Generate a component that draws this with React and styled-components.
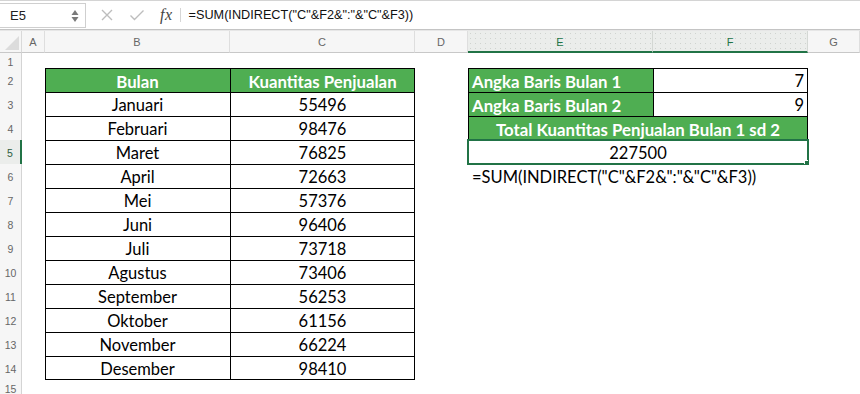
import React from "react"
import styled, { createGlobalStyle, css } from "styled-components"

const GREEN_FILL = "#4fae52"
const EXCEL_GREEN = "#217346"
const FORMULA = '=SUM(INDIRECT("C"&F2&":"&"C"&F3))'

const months = [
  ["Januari", 55496],
  ["Februari", 98476],
  ["Maret", 76825],
  ["April", 72663],
  ["Mei", 57376],
  ["Juni", 96406],
  ["Juli", 73718],
  ["Agustus", 73406],
  ["September", 56253],
  ["Oktober", 61156],
  ["November", 66224],
  ["Desember", 98410],
]

const columns = ["A", "B", "C", "D", "E", "F", "G"]
const activeCols = ["E", "F"]

const GlobalStyle = createGlobalStyle`
  html, body {
    margin: 0;
    padding: 0;
    background: #ffffff;
    overflow: hidden;
  }
`

export default function App() {
  const rows = []
  for (let r = 1; r <= 15; r++) rows.push(r)

  return (
    <>
      <GlobalStyle />
      <Window>
        <Toolbar>
          <NameBox>
            <span>E5</span>
            <Stepper width="8" height="14" viewBox="0 0 8 14">
              <path d="M4 1 L7.5 6 H0.5 Z" fill="#7a7a7a" />
              <path d="M4 13 L7.5 8 H0.5 Z" fill="#7a7a7a" />
            </Stepper>
          </NameBox>
          <ToolIcon width="14" height="14" viewBox="0 0 14 14">
            <path d="M2 2 L12 12 M12 2 L2 12" stroke="#bdbdbd" strokeWidth="1.4" fill="none" />
          </ToolIcon>
          <ToolIcon width="16" height="14" viewBox="0 0 16 14">
            <path d="M1.5 7.5 L5.5 11.5 L14.5 2.5" stroke="#bdbdbd" strokeWidth="1.4" fill="none" />
          </ToolIcon>
          <Fx>fx</Fx>
          <Divider />
          <FormulaText>{FORMULA}</FormulaText>
        </Toolbar>

        <Sheet>
          <Corner>
            <svg width="16" height="16" viewBox="0 0 16 16">
              <path d="M16 2 L16 16 L2 16 Z" fill="#dcdcdc" />
            </svg>
          </Corner>
          {columns.map((c) => (
            <ColHeader key={c} $active={activeCols.includes(c)}>
              {c}
            </ColHeader>
          ))}

          {rows.map((r) => (
            <React.Fragment key={r}>
              <RowHeader $active={r === 5}>{r}</RowHeader>
              <Cell />
              {renderLeftTable(r)}
              <Cell />
              {renderRightTable(r)}
              <Cell />
            </React.Fragment>
          ))}
        </Sheet>
      </Window>
    </>
  )
}

function renderLeftTable(r) {
  if (r === 2) {
    return (
      <>
        <Cell $fill $bold $top $left>Bulan</Cell>
        <Cell $fill $bold $top $left $right>Kuantitas Penjualan</Cell>
      </>
    )
  }
  if (r >= 3 && r <= 14) {
    const [name, qty] = months[r - 3]
    const last = r === 14
    return (
      <>
        <Cell $top $left $bottom={last}>{name}</Cell>
        <Cell $top $left $right $bottom={last}>{qty}</Cell>
      </>
    )
  }
  return (
    <>
      <Cell />
      <Cell />
    </>
  )
}

function renderRightTable(r) {
  if (r === 2 || r === 3) {
    return (
      <>
        <Cell $fill $bold $align="left" $top $left>
          Angka Baris Bulan {r - 1}
        </Cell>
        <Cell $align="right" $top $left $right>
          {r === 2 ? 7 : 9}
        </Cell>
      </>
    )
  }
  if (r === 4) {
    return (
      <Cell $span={2} $fill $bold $top $left $right>
        Total Kuantitas Penjualan Bulan 1 sd 2
      </Cell>
    )
  }
  if (r === 5) {
    return (
      <Cell $span={2} $selected $top $left $right $bottom>
        227500
      </Cell>
    )
  }
  if (r === 6) {
    return (
      <>
        <Cell $align="left" $overflow>{FORMULA}</Cell>
        <Cell />
      </>
    )
  }
  return (
    <>
      <Cell />
      <Cell />
    </>
  )
}

const Window = styled.div`
  width: 860px;
  height: 394px;
  overflow: hidden;
  background: #ffffff;
`

const Toolbar = styled.div`
  height: 28px;
  display: flex;
  align-items: center;
  border-top: 1px solid #d4d4d4;
  border-bottom: 1px solid #c4c4c4;
  box-shadow: 0 1px 0 #e6e6e6;
  font-family: "Liberation Sans", Arial, sans-serif;
`

const NameBox = styled.div`
  box-sizing: border-box;
  width: 86px;
  height: 25px;
  margin-top: 1px;
  display: flex;
  align-items: center;
  justify-content: space-between;
  padding: 0 6px 0 10px;
  border: 1px solid #cfcfcf;
  border-left: none;
  font-size: 13px;
  color: #222;
`

const Stepper = styled.svg`
  display: block;
`

const ToolIcon = styled.svg`
  display: block;
  margin-left: 15px;
  &:first-of-type {
    margin-left: 14px;
  }
`

const Fx = styled.span`
  margin-left: 15px;
  font-family: "Liberation Serif", "Times New Roman", serif;
  font-style: italic;
  font-size: 16px;
  color: #444;
  letter-spacing: 0.5px;
`

const Divider = styled.div`
  width: 1px;
  height: 14px;
  margin-left: 7px;
  background: #d6d6d6;
`

const FormulaText = styled.div`
  margin-left: 8px;
  font-size: 12.7px;
  color: #111;
  white-space: nowrap;
`

const Sheet = styled.div`
  display: grid;
  grid-template-columns: 22px 23px 185px 185px 53px 185px 155px 52px;
  grid-template-rows: 22px 15px repeat(13, 24px) 15px;
  margin-top: 1px;
`

const headerText = css`
  font-family: "Liberation Sans", Arial, sans-serif;
  font-size: 10.5px;
  color: #666;
  display: flex;
  align-items: center;
  justify-content: center;
  box-sizing: border-box;
`

const Corner = styled.div`
  background: #f6f6f6;
  border-right: 1px solid #d9d9d9;
  border-bottom: 1px solid #c8c8c8;
  display: flex;
  align-items: flex-end;
  justify-content: flex-end;
  padding: 0 2px 2px 0;
  box-sizing: border-box;
`

const ColHeader = styled.div`
  ${headerText};
  font-size: 11px;
  background: #f6f6f6;
  border-right: 1px solid #dedede;
  border-bottom: 1px solid #c8c8c8;
  padding-top: 1px;

  ${(p) =>
    p.$active &&
    css`
      color: ${EXCEL_GREEN};
      background-color: #ebedeb;
      background-image: radial-gradient(#cfd3cf 0.7px, transparent 0.8px);
      background-size: 5px 5px;
      border-bottom: 2px solid ${EXCEL_GREEN};
      border-right-color: #d4d8d4;
    `}
`

const RowHeader = styled.div`
  ${headerText};
  background: #f6f6f6;
  border-right: 1px solid #d4d4d4;
  padding-top: 2px;

  ${(p) =>
    p.$active &&
    css`
      color: #2e5d3f;
      background: #ebedeb;
      border-right: 2px solid ${EXCEL_GREEN};
    `}
`

const borderShadow = (p) => {
  const list = []
  if (p.$top) list.push("inset 0 1px 0 #000")
  if (p.$left) list.push("inset 1px 0 0 #000")
  if (p.$right) list.push("inset -1px 0 0 #000")
  if (p.$bottom) list.push("inset 0 -1px 0 #000")
  return list.length ? list.join(", ") : "none"
}

const Cell = styled.div`
  position: relative;
  box-sizing: border-box;
  grid-column: span ${(p) => p.$span || 1};
  display: flex;
  align-items: center;
  justify-content: ${(p) =>
    p.$align === "left" ? "flex-start" : p.$align === "right" ? "flex-end" : "center"};
  padding: 2px 4px 0 4px;
  font-family: Lato, "Noto Sans", sans-serif;
  font-size: ${(p) => (p.$bold ? "16.8px" : "16.5px")};
  font-weight: ${(p) => (p.$bold ? 700 : 400)};
  color: ${(p) => (p.$fill ? "#ffffff" : "#000000")};
  background: ${(p) => (p.$fill ? GREEN_FILL : "transparent")};
  box-shadow: ${borderShadow};
  white-space: nowrap;
  overflow: ${(p) => (p.$overflow ? "visible" : "hidden")};

  ${(p) =>
    p.$selected &&
    css`
      outline: 2px solid ${EXCEL_GREEN};
      outline-offset: -1px;

      &::after {
        content: "";
        position: absolute;
        right: -3px;
        bottom: -3px;
        width: 5px;
        height: 5px;
        background: ${EXCEL_GREEN};
        border: 1px solid #ffffff;
      }
    `}
`
